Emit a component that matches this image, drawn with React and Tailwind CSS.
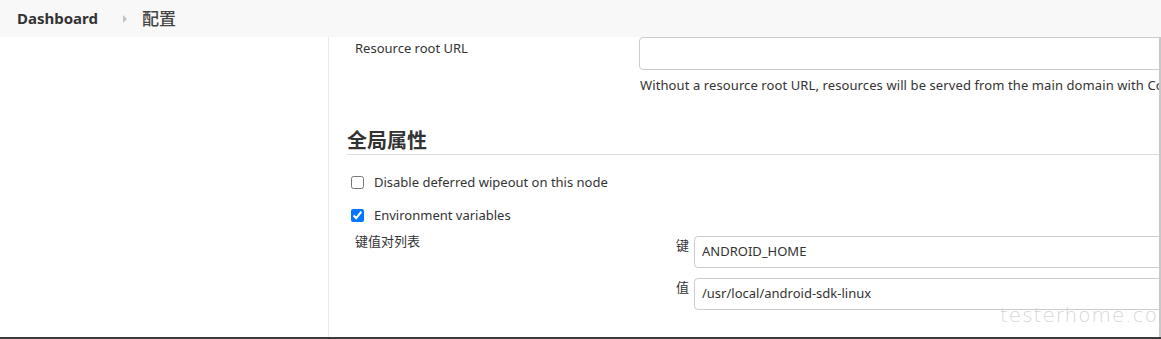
import { useState } from "react";

function Breadcrumb() {
  return (
    <div className="h-[37px] bg-[#f8f8f8] flex items-center pl-[17px] text-[#333]">
      <span className="font-bold text-[15px]">Dashboard</span>
      <span className="ml-[25px] mr-[15px] w-0 h-0 border-y-[4px] border-y-transparent border-l-[4px] border-l-[#c4c4c4]"></span>
      <span className="text-[17px] font-medium text-[#444]">配置</span>
    </div>
  );
}

function Checkbox({ checked, label }) {
  const [on, setOn] = useState(checked);
  return (
    <label className="flex items-center h-[20px] pl-[4px]">
      <input
        type="checkbox"
        checked={on}
        onChange={() => setOn(!on)}
        className="w-[13px] h-[13px] m-0 accent-[#0075ff]"
      />
      <span className="ml-[10px] text-[13px] text-[#333]">{label}</span>
    </label>
  );
}

function App() {
  return (
    <div
      className="w-[1161px] h-[339px] overflow-hidden bg-white flex flex-col"
      style={{ fontFamily: '"Noto Sans", "Noto Sans CJK SC", sans-serif' }}
    >
      <Breadcrumb />
      <div className="flex flex-1 min-h-0">
        {/* side panel */}
        <div className="w-[329px] shrink-0 border-r border-[#e8ecea]"></div>

        {/* main form */}
        <div className="w-[830px] shrink-0 overflow-hidden relative pl-[18px]">
          <div className="flex">
            <div className="w-[292px] shrink-0 pl-[8px] pt-[2px] text-[13px] text-[#333]">Resource root URL</div>
            <div className="flex-1 min-w-0">
              <div className="h-[33px] w-[560px] border border-[#ccc] rounded-[4px]"></div>
              <div className="mt-[6px] text-[13px] text-[#333] whitespace-nowrap pl-[1px] tracking-[0.1px]">
                Without a resource root URL, resources will be served from the main domain with Content-Security-Policy set.
              </div>
            </div>
          </div>

          <div className="mt-[32px] border-b border-[#ddd] mr-[-20px]">
            <h2 className="text-[20px] font-bold text-[#333] leading-[26px]">全局属性</h2>
          </div>

          <div className="mt-[18px] flex flex-col gap-[13px]">
            <Checkbox checked={false} label="Disable deferred wipeout on this node" />
            <Checkbox checked={true} label="Environment variables" />
          </div>

          <div className="flex mt-[6px]">
            <div className="w-[329px] shrink-0 pl-[8px] text-[13px] text-[#333]">键值对列表</div>
            <div className="flex-1 flex flex-col gap-[10px] pt-[4px]">
              <div className="flex items-start">
                <span className="w-[18px] text-[13px] text-[#333]">键</span>
                <div className="h-[32px] w-[520px] border border-[#ccc] rounded-[4px] flex items-center pl-[7px] text-[13px] text-[#333]">
                  ANDROID_HOME
                </div>
              </div>
              <div className="flex items-start">
                <span className="w-[18px] text-[13px] text-[#333]">值</span>
                <div className="h-[32px] w-[520px] border border-[#ccc] rounded-[4px] flex items-center pl-[7px] text-[13px] text-[#333]">
                  /usr/local/android-sdk-linux
                </div>
              </div>
            </div>
          </div>

          <span
            className="absolute left-[671px] top-[263px] text-[20px] tracking-[1px] text-[#d6d6d6] font-light"
            style={{ fontFamily: '"DejaVu Sans", sans-serif' }}
          >
            testerhome.com
          </span>
        </div>

        <div className="w-[2px] shrink-0 bg-[#c8c8c8]"></div>
      </div>
      <div className="h-[2px] bg-[#3b3b3b] shrink-0"></div>
    </div>
  );
}

export default App;
